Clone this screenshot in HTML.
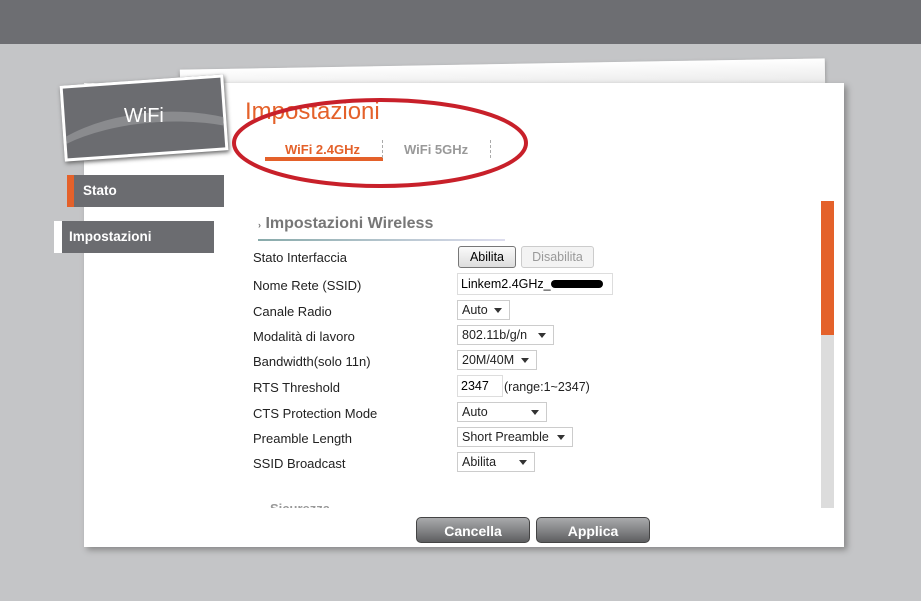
<!DOCTYPE html><html><head><style>
body{margin:0;width:921px;height:601px;background:#c4c5c7;position:relative;overflow:hidden;font-family:"Liberation Sans",sans-serif}
.a{position:absolute}
.lbl{position:absolute;left:253px;font-size:13px;color:#222}
.sel{position:absolute;left:457px;height:20px;border:1px solid #ccc;background:#fff;font-size:12.5px;color:#222;box-sizing:border-box;padding:2px 4px;line-height:15px}
.sel:after{content:"";position:absolute;right:7px;top:7px;border:4px solid transparent;border-top:5px solid #333;border-bottom:0}
.btn{position:absolute;top:517px;height:26px;width:114px;border-radius:5px;background:linear-gradient(#a9aaac,#7d7e80 60%,#5d5e60);border:1px solid #444;color:#fff;font-weight:bold;font-size:14px;text-align:center;line-height:26px;box-sizing:border-box}
</style></head><body>
<div class="a" style="left:0;top:0;width:921px;height:44px;background:#6d6e72"></div>
<div class="a" style="left:180px;top:64px;width:645px;height:26px;background:linear-gradient(#fff,#e8e8e8);transform:rotate(-1deg);box-shadow:0 2px 4px #888"></div>
<div class="a" style="left:84px;top:83px;width:760px;height:464px;background:#fff;box-shadow:3px 3px 6px #888"></div>
<div class="a" style="left:62px;top:80px;width:158px;height:70px;background:#6b6c70;border:3px solid #fff;transform:rotate(-4deg);box-shadow:1px 2px 4px #666;overflow:hidden"><div class="a" style="left:-40px;top:30px;width:260px;height:120px;border-radius:50%;border-top:10px solid #8a8b8e"></div><div style="position:absolute;left:0;right:0;top:22px;text-align:center;color:#fff;font-size:20px;transform:rotate(4deg)">WiFi</div></div>
<div class="a" style="left:67px;top:175px;width:157px;height:32px;background:#6b6c70;border-left:7px solid #e4612a;box-sizing:border-box;color:#fff;font-weight:bold;font-size:13.5px;line-height:32px;padding-left:9px">Stato</div>
<div class="a" style="left:54px;top:221px;width:160px;height:32px;background:#6b6c70;border-left:8px solid #fff;box-sizing:border-box;color:#fff;font-weight:bold;font-size:13.5px;line-height:32px;padding-left:7px">Impostazioni</div>
<div class="a" style="left:245px;top:98px;color:#e4612a;font-size:24px">Impostazioni</div>
<div class="a" style="left:285px;top:142px;color:#e4612a;font-size:13px;font-weight:bold">WiFi 2.4GHz</div>
<div class="a" style="left:265px;top:157px;width:118px;height:4px;background:#e4612a"></div>
<div class="a" style="left:382px;top:140px;height:18px;border-left:1px dashed #aaa"></div>
<div class="a" style="left:404px;top:142px;color:#999;font-size:13px;font-weight:bold">WiFi 5GHz</div>
<div class="a" style="left:490px;top:140px;height:18px;border-left:1px dashed #aaa"></div>
<svg class="a" style="left:230px;top:95px" width="305" height="100"><ellipse cx="150" cy="48" rx="146" ry="43" fill="none" stroke="#c8202a" stroke-width="4"/></svg>
<div class="a" style="left:258px;top:215px;color:#777;font-size:16px;font-weight:bold"><span style="font-size:9px">›</span> Impostazioni Wireless</div>
<div class="a" style="left:258px;top:239px;width:247px;height:2px;background:linear-gradient(90deg,#8aa,#dde)"></div>
<div class="lbl" style="top:250px">Stato Interfaccia</div>
<div class="a" style="left:458px;top:246px;width:58px;height:22px;border:1px solid #777;border-radius:3px;background:linear-gradient(#fafafa,#ddd);font-size:12.5px;text-align:center;line-height:21px;box-sizing:border-box">Abilita</div>
<div class="a" style="left:521px;top:246px;width:73px;height:22px;border:1px solid #ccc;border-radius:3px;background:#f3f3f3;color:#999;font-size:12.5px;text-align:center;line-height:21px;box-sizing:border-box">Disabilita</div>
<div class="lbl" style="top:278px">Nome Rete (SSID)</div>
<div class="a" style="left:457px;top:273px;width:156px;height:22px;border:1px solid #ddd;box-sizing:border-box;font-size:12.5px;padding:3px 3px">Linkem2.4GHz_<span style="display:inline-block;width:52px;height:8px;background:#000;border-radius:4px"></span></div>
<div class="lbl" style="top:304px">Canale Radio</div><div class="sel" style="top:300px;width:53px">Auto</div>
<div class="lbl" style="top:329px">Modalità di lavoro</div><div class="sel" style="top:325px;width:97px">802.11b/g/n</div>
<div class="lbl" style="top:354px">Bandwidth(solo 11n)</div><div class="sel" style="top:350px;width:80px">20M/40M</div>
<div class="lbl" style="top:380px">RTS Threshold</div>
<div class="a" style="left:457px;top:375px;width:46px;height:22px;border:1px solid #ddd;box-sizing:border-box;font-size:12.5px;padding:3px">2347</div>
<div class="a" style="left:504px;top:380px;font-size:12.5px;color:#222">(range:1~2347)</div>
<div class="lbl" style="top:406px">CTS Protection Mode</div><div class="sel" style="top:402px;width:90px">Auto</div>
<div class="lbl" style="top:431px">Preamble Length</div><div class="sel" style="top:427px;width:116px">Short Preamble</div>
<div class="lbl" style="top:456px">SSID Broadcast</div><div class="sel" style="top:452px;width:78px">Abilita</div>
<div class="a" style="left:270px;top:502px;width:80px;height:6px;overflow:hidden"><div style="color:#999;font-weight:bold;font-size:13px;margin-top:-1px">Sicurezza</div></div>
<div class="a" style="left:821px;top:201px;width:13px;height:307px;background:#dcdcdc"></div>
<div class="a" style="left:821px;top:201px;width:13px;height:134px;background:#e4612a"></div>
<div class="btn" style="left:416px">Cancella</div>
<div class="btn" style="left:536px">Applica</div>
</body></html>
